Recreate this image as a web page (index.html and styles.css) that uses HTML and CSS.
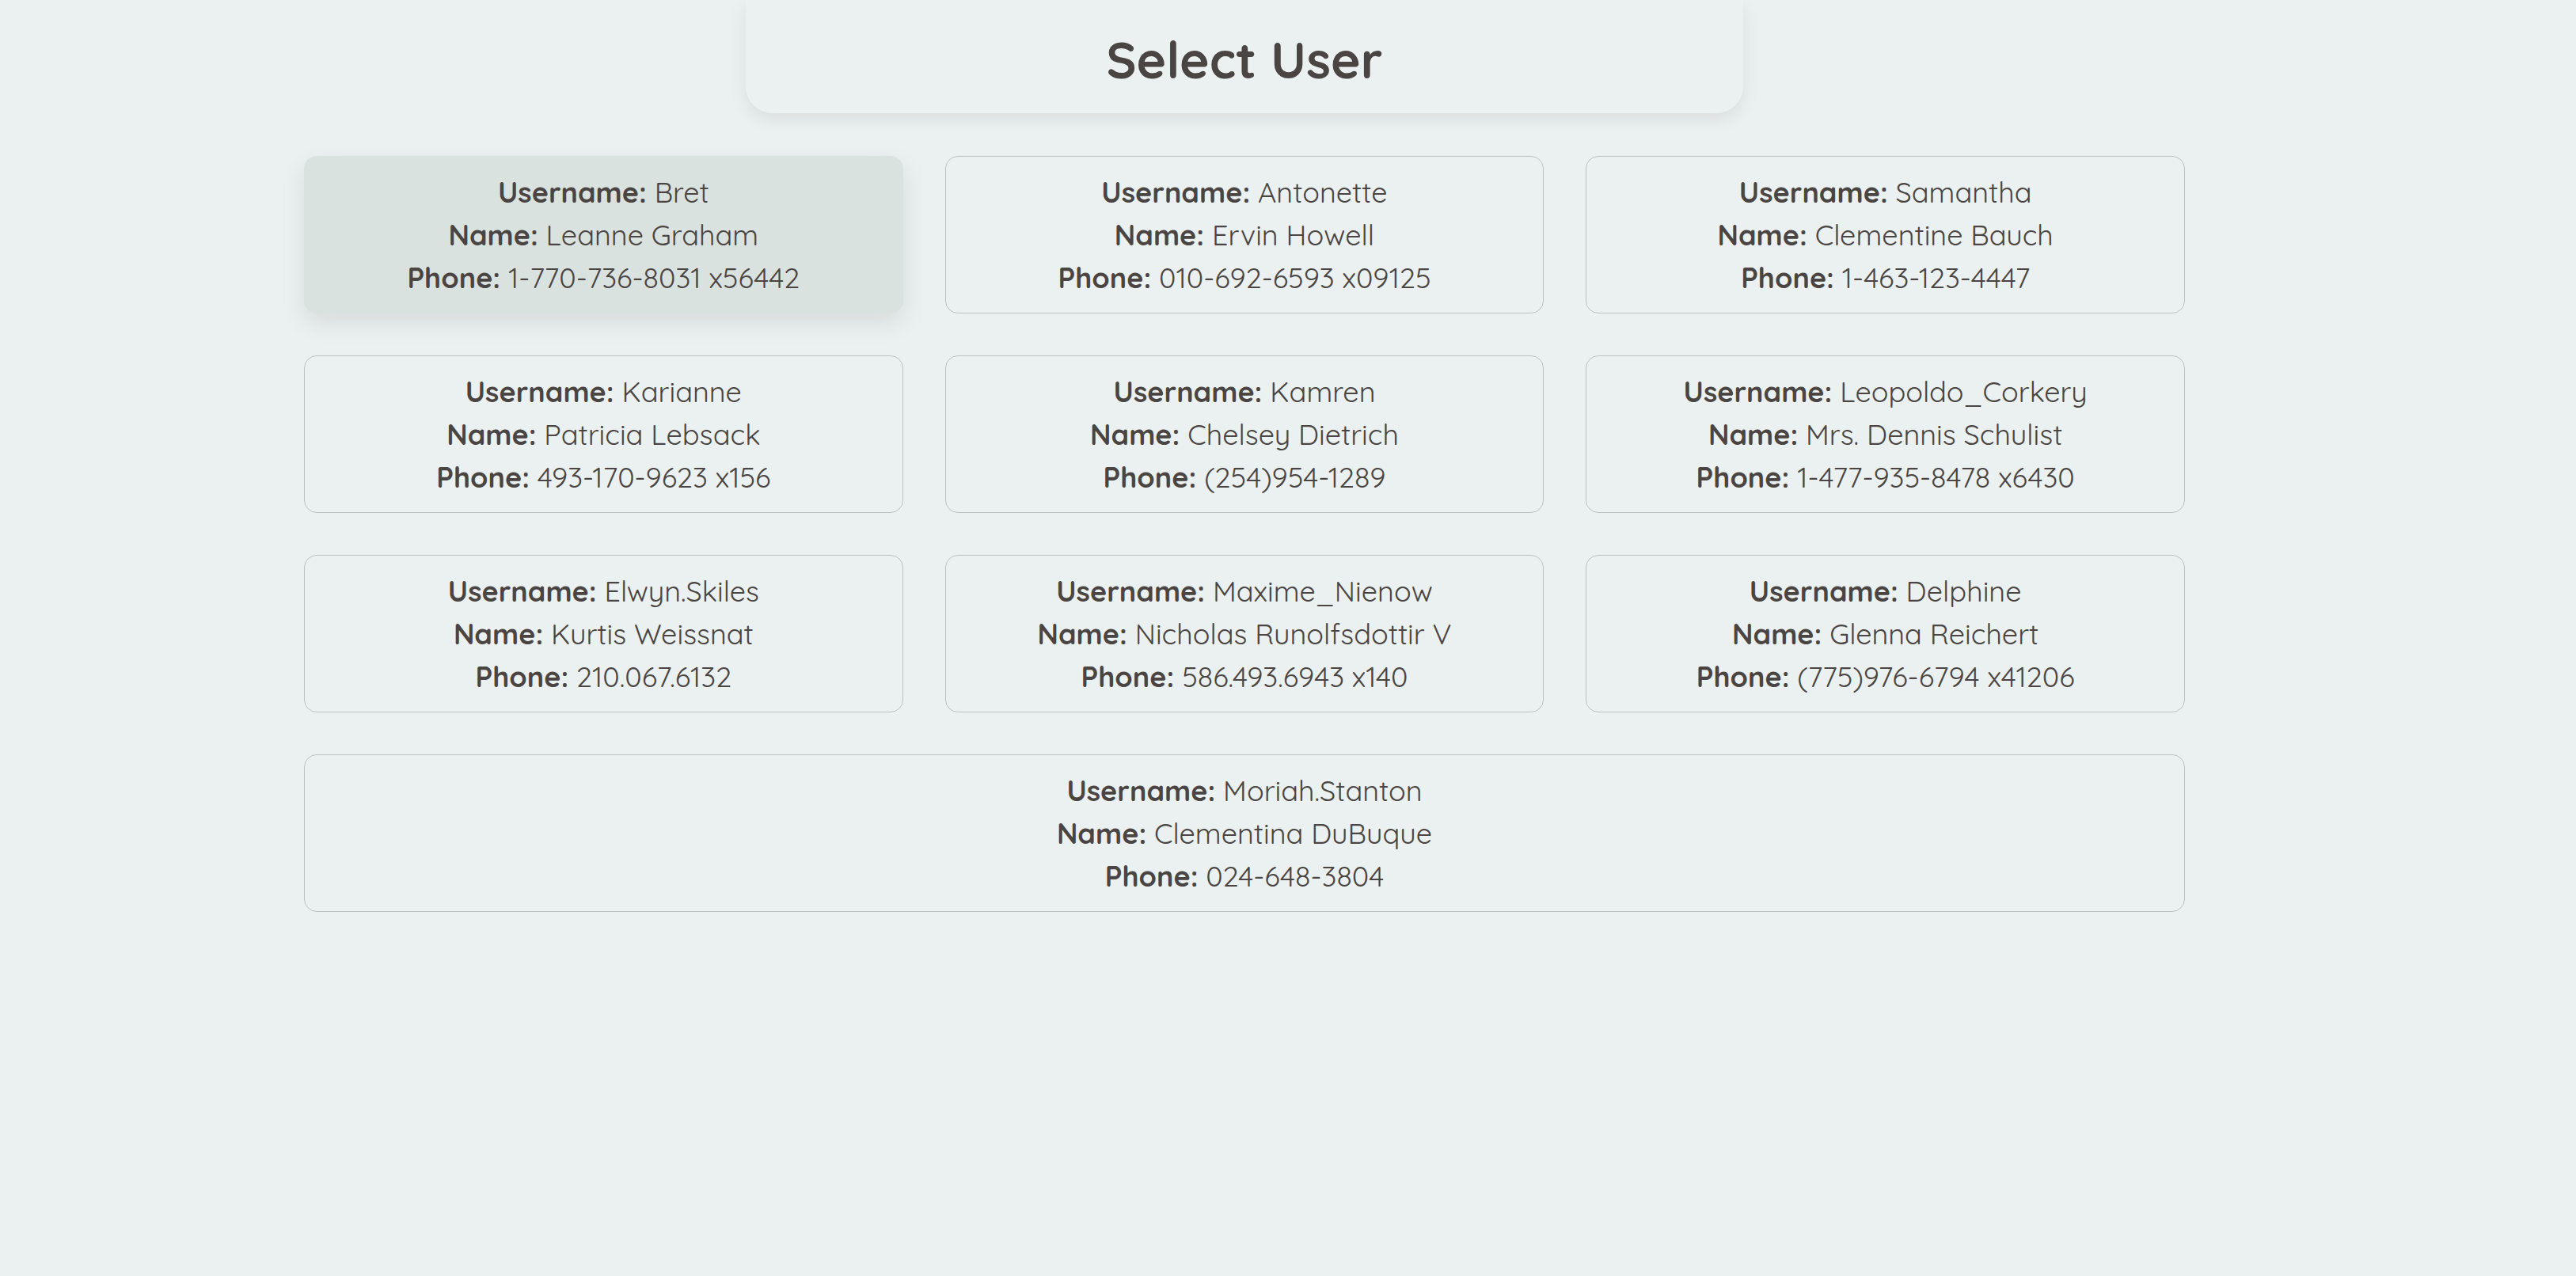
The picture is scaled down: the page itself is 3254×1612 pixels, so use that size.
FILE: index.html
```html
<!DOCTYPE html>
<html lang="en">
<head>
<meta charset="utf-8">
<title>Select User</title>
<link rel="stylesheet" href="styles.css">
</head>
<body>
<div class="page">
  <header class="title-card">
    <h1 class="title">Select User</h1>
  </header>
  <main class="user-grid">
    <div class="user-card selected">
      <div class="row"><b>Username:</b> Bret</div>
      <div class="row"><b>Name:</b> Leanne Graham</div>
      <div class="row"><b>Phone:</b> 1-770-736-8031 x56442</div>
    </div>
    <div class="user-card">
      <div class="row"><b>Username:</b> Antonette</div>
      <div class="row"><b>Name:</b> Ervin Howell</div>
      <div class="row"><b>Phone:</b> 010-692-6593 x09125</div>
    </div>
    <div class="user-card">
      <div class="row"><b>Username:</b> Samantha</div>
      <div class="row"><b>Name:</b> Clementine Bauch</div>
      <div class="row"><b>Phone:</b> 1-463-123-4447</div>
    </div>
    <div class="user-card">
      <div class="row"><b>Username:</b> Karianne</div>
      <div class="row"><b>Name:</b> Patricia Lebsack</div>
      <div class="row"><b>Phone:</b> 493-170-9623 x156</div>
    </div>
    <div class="user-card">
      <div class="row"><b>Username:</b> Kamren</div>
      <div class="row"><b>Name:</b> Chelsey Dietrich</div>
      <div class="row"><b>Phone:</b> (254)954-1289</div>
    </div>
    <div class="user-card">
      <div class="row"><b>Username:</b> Leopoldo_Corkery</div>
      <div class="row"><b>Name:</b> Mrs. Dennis Schulist</div>
      <div class="row"><b>Phone:</b> 1-477-935-8478 x6430</div>
    </div>
    <div class="user-card">
      <div class="row"><b>Username:</b> Elwyn.Skiles</div>
      <div class="row"><b>Name:</b> Kurtis Weissnat</div>
      <div class="row"><b>Phone:</b> 210.067.6132</div>
    </div>
    <div class="user-card">
      <div class="row"><b>Username:</b> Maxime_Nienow</div>
      <div class="row"><b>Name:</b> Nicholas Runolfsdottir V</div>
      <div class="row"><b>Phone:</b> 586.493.6943 x140</div>
    </div>
    <div class="user-card">
      <div class="row"><b>Username:</b> Delphine</div>
      <div class="row"><b>Name:</b> Glenna Reichert</div>
      <div class="row"><b>Phone:</b> (775)976-6794 x41206</div>
    </div>
    <div class="user-card wide">
      <div class="row"><b>Username:</b> Moriah.Stanton</div>
      <div class="row"><b>Name:</b> Clementina DuBuque</div>
      <div class="row"><b>Phone:</b> 024-648-3804</div>
    </div>
  </main>
</div>
</body>
</html>
```

FILE: styles.css
```css
html, body {
  margin: 0;
  padding: 0;
  background: #ebf1f0;
}

body {
  font-family: "Quicksand", "Lato", "Open Sans", sans-serif;
  color: #4a4543;
  min-height: 1612px;
}

.page {
  width: 3144px;
  display: flex;
  flex-direction: column;
  align-items: center;
}

.title-card {
  width: 1260px;
  height: 143px;
  box-sizing: border-box;
  background: #ebf1f0;
  border-radius: 0 0 34px 34px;
  box-shadow: 0 8px 22px rgba(0, 0, 0, 0.08);
  display: flex;
  align-items: center;
  justify-content: center;
  padding-top: 6px;
}

.title {
  margin: 0;
  font-size: 64px;
  font-weight: 700;
  line-height: 1;
  color: #4a4543;
}

.user-grid {
  margin-top: 54px;
  width: 2376px;
  display: grid;
  grid-template-columns: repeat(3, 1fr);
  column-gap: 53px;
  row-gap: 53px;
}

.user-card {
  box-sizing: border-box;
  height: 199px;
  border: 1px solid #bdc1c1;
  border-radius: 16px;
  padding: 16px;
  display: flex;
  flex-direction: column;
  align-items: center;
  justify-content: center;
  font-size: 36px;
  line-height: 54px;
  text-align: center;
}

.user-card.selected {
  background: #dae2df;
  border-color: #dae2df;
  box-shadow: 0 12px 32px rgba(0, 0, 0, 0.09);
}

.user-card.wide {
  grid-column: 1 / -1;
}

.row b {
  font-weight: 700;
}
```
